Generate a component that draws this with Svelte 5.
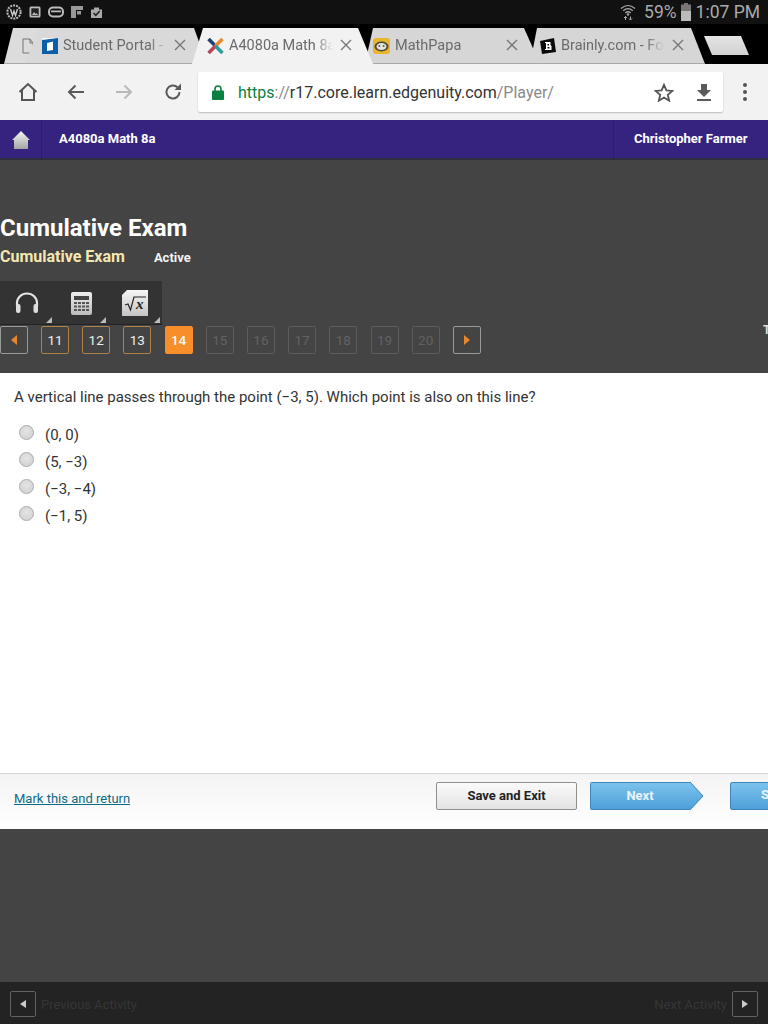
<script>
  const pagesDone = [11, 12, 13];
  const pagesOff = [15, 16, 17, 18, 19, 20];
  const options = ['(0, 0)', '(5, −3)', '(−3, −4)', '(−1, 5)'];
</script>

{#snippet closeX()}
  <svg class="x" width="12" height="12" viewBox="0 0 12 12"><path d="M1 1 11 11M11 1 1 11" fill="none" stroke="#777" stroke-width="1.400"/></svg>
{/snippet}

<div class="page">
  <div class="status">
    <div class="status-left">
      <svg width="16" height="16" viewBox="0 0 16 16"><circle cx="8" cy="8" r="6.600" fill="none" stroke="#bbb" stroke-width="2" stroke-dasharray="2 1"/><path d="M4.500 5 6.500 11.500 8 7 9.500 11.500 11.500 5" fill="none" stroke="#ccc" stroke-width="1.400"/></svg>
      <svg width="12" height="12" viewBox="0 0 12 12"><rect x=".5" y=".5" width="11" height="11" rx="1.500" fill="#bbb"/><rect x="2.300" y="2.300" width="7.400" height="7.400" fill="#222"/><path d="M3 9l2-3 1.500 2 1-1 1.500 2z" fill="#bbb"/></svg>
      <svg width="16" height="12" viewBox="0 0 16 12"><rect x="1" y="1.500" width="14" height="9" rx="4" fill="none" stroke="#bbb" stroke-width="2"/><rect x="3" y="4.500" width="10" height="1.800" fill="#bbb"/></svg>
      <svg width="12" height="12" viewBox="0 0 12 12"><path d="M0 0H12V4H5V12H0Z" fill="#999"/><rect x="6" y="5" width="4" height="3.500" fill="#999"/></svg>
      <svg width="13" height="13" viewBox="0 0 13 13"><path d="M1 3.500H4V1.500H9V3.500H12V12H1Z" fill="#aaa"/><path d="M3.500 7 5.800 9.300 9.800 5" fill="none" stroke="#222" stroke-width="1.500"/></svg>
    </div>
    <div class="status-right">
      <svg class="wifi" width="16" height="18" viewBox="0 0 16 18"><g fill="none" stroke="#aaa" stroke-width="1.200"><path d="M1 5.500Q8 -.5 15 5.500"/><path d="M3.200 7.800Q8 3.500 12.800 7.800"/><path d="M5.300 10Q8 7.500 10.700 10"/></g><circle cx="8" cy="11.500" r="1.200" fill="#aaa"/><path d="M5.500 13.500v3.500M4 15l1.500-1.500L7 15M10.500 13.500v3.500M9 15.500l1.500 1.500 1.500-1.500" fill="none" stroke="#aaa"/></svg>
      <span class="pct">59%</span>
      <svg width="10" height="18" viewBox="0 0 10 18"><rect x="3" y="0" width="4" height="2" fill="#777"/><rect x="0" y="1.500" width="10" height="7" fill="#777"/><rect x="0" y="8" width="10" height="10" fill="#bbb"/></svg>
      <span class="clock">1:07 PM</span>
    </div>
  </div>

  <div class="tabstrip">
    <div class="tab ghost">
      <svg width="12" height="16" viewBox="0 0 12 16"><path d="M1 1H8L11 5V15H1ZM8 1V5H11" fill="none" stroke="#777"/></svg>
    </div>
    <div class="tab t1">
      <svg width="16" height="16" viewBox="0 0 16 16"><rect width="16" height="16" rx="2" fill="#fff"/><path d="M0 2 16 0V16H0Z" fill="#0c5ea8"/><path d="M5 5 11 3.500V12L5 13Z" fill="#fff"/></svg>
      <span class="name">Student Portal - Student</span>
      {@render closeX()}
    </div>
    <div class="tab active">
      <svg width="17" height="16" viewBox="0 0 17 16"><path d="M1.500 1 8.500 8" stroke="#24406e" stroke-width="3.600"/><path d="M15.500 1 8.500 8" stroke="#ee8a2e" stroke-width="3.600"/><path d="M1.500 15 8.500 8" stroke="#b8455a" stroke-width="3.600"/><path d="M15.500 15 8.500 8" stroke="#2f9a9a" stroke-width="3.600"/></svg>
      <span class="name">A4080a Math 8a</span>
      {@render closeX()}
    </div>
    <div class="tab t3">
      <svg width="17" height="16" viewBox="0 0 17 16"><rect width="17" height="16" rx="3" fill="#e8b52c"/><ellipse cx="8.500" cy="8.500" rx="7" ry="5" fill="#4a4a44"/><ellipse cx="8.500" cy="8.500" rx="5" ry="3.500" fill="#e8e4d4"/><circle cx="6.300" cy="8" r="1" fill="#555"/><circle cx="10.700" cy="8" r="1" fill="#555"/></svg>
      <span class="name">MathPapa</span>
      {@render closeX()}
    </div>
    <div class="tab t4">
      <svg width="16" height="16" viewBox="0 0 16 16"><path d="M0 3 14 0 16 14 2 16Z" fill="#0a0a0a"/><path d="M5 4H10.500V7L11.500 8V12H5V11H6V5H5Z" fill="#fff"/><rect x="7.500" y="6" width="1.500" height="1.500" fill="#0a0a0a"/><rect x="7.500" y="9" width="2" height="1.500" fill="#0a0a0a"/></svg>
      <span class="name">Brainly.com - For students</span>
      {@render closeX()}
    </div>
    <div class="newtab"></div>
  </div>

  <div class="toolbar">
    <svg class="tb home" width="20" height="20" viewBox="0 0 20 20"><path d="M1.500 10 10 2 18.500 10M4 8V18H16V8" fill="none" stroke="#555" stroke-width="2"/></svg>
    <svg class="tb back" width="18" height="16" viewBox="0 0 18 16"><path d="M17 8H2M8.500 1.500 2 8 8.500 14.500" fill="none" stroke="#5a5a5a" stroke-width="2"/></svg>
    <svg class="tb fwd" width="18" height="16" viewBox="0 0 18 16"><path d="M1 8H16M9.500 1.500 16 8 9.500 14.500" fill="none" stroke="#b9b9b9" stroke-width="2"/></svg>
    <svg class="tb reload" width="18" height="18" viewBox="0 0 18 18"><path d="M15.500 9A6.500 6.500 0 1 1 13.500 4.300" fill="none" stroke="#5a5a5a" stroke-width="2"/><path d="M10.500 7H17V.5Z" fill="#5a5a5a"/></svg>
    <div class="omnibox">
      <svg class="lock" width="12" height="15" viewBox="0 0 12 15"><rect y="5.500" width="12" height="9.500" rx="1" fill="#0b8043"/><path d="M3 6V4a3 3 0 0 1 6 0V6" fill="none" stroke="#0b8043" stroke-width="1.600"/></svg>
      <span class="url"><span class="green">https</span><span class="grey">://</span>r17.core.learn.edgenuity.com<span class="grey">/Player/</span></span>
      <svg class="star" width="20" height="19" viewBox="0 0 20 19"><path d="M10 1.800 12.400 7.400 18.400 7.900 13.800 11.800 15.200 17.700 10 14.600 4.800 17.700 6.200 11.800 1.600 7.900 7.600 7.400Z" fill="none" stroke="#555" stroke-width="1.800"/></svg>
      <svg class="dl" width="14" height="17" viewBox="0 0 14 17"><path d="M4 0H10V6H14L7 13 0 6H4Z" fill="#5a5a5a"/><rect y="15" width="14" height="2" fill="#5a5a5a"/></svg>
    </div>
    <div class="menu"><i></i><i></i><i></i></div>
  </div>

  <div class="coursebar">
    <div class="homecell">
      <svg width="20" height="20" viewBox="0 0 20 20"><defs><linearGradient id="hg" x1="0" y1="0" x2="0" y2="1"><stop offset="0" stop-color="#f6f6f6"/><stop offset="1" stop-color="#a4a4a4"/></linearGradient></defs><path d="M10 1 19 10H17V19H3V10H1Z" fill="url(#hg)"/></svg>
    </div>
    <div class="coursename">A4080a Math 8a</div>
    <div class="user">Christopher Farmer</div>
  </div>

  <div class="hero">
    <h1>Cumulative Exam</h1>
    <div class="sub"><span class="subtitle">Cumulative Exam</span><span class="state">Active</span></div>
    <div class="tools">
      <div class="tool">
        <svg width="26" height="22" viewBox="0 0 26 22"><path d="M3 14V11A10 9.500 0 0 1 23 11V14" fill="none" stroke="#e6e6e6" stroke-width="2.200"/><rect x="2" y="12" width="4.500" height="9" rx="2" fill="#ddd"/><rect x="19.500" y="12" width="4.500" height="9" rx="2" fill="#ddd"/></svg>
        <i class="corner"></i>
      </div>
      <div class="tool">
        <svg width="21" height="23" viewBox="0 0 21 23"><defs><linearGradient id="cg" x1="0" y1="0" x2="0" y2="1"><stop offset="0" stop-color="#eee"/><stop offset="1" stop-color="#bbb"/></linearGradient></defs><rect width="21" height="23" rx="2" fill="url(#cg)"/><rect x="3" y="4" width="15" height="4" fill="#444"/><g fill="#555"><rect x="3" y="10" width="3" height="2"/><rect x="7" y="10" width="3" height="2"/><rect x="11" y="10" width="3" height="2"/><rect x="15" y="10" width="3" height="2"/><rect x="3" y="13.500" width="3" height="2"/><rect x="7" y="13.500" width="3" height="2"/><rect x="11" y="13.500" width="3" height="2"/><rect x="15" y="13.500" width="3" height="2"/><rect x="3" y="17" width="3" height="2"/><rect x="7" y="17" width="3" height="2"/><rect x="11" y="17" width="3" height="2"/><rect x="15" y="17" width="3" height="2"/></g></svg>
        <i class="corner"></i>
      </div>
      <div class="tool">
        <svg width="26" height="26" viewBox="0 0 26 26"><defs><linearGradient id="fg" x1="0" y1="0" x2="0" y2="1"><stop offset="0" stop-color="#f6f6f6"/><stop offset="1" stop-color="#c4c4c4"/></linearGradient></defs><path d="M5 0H26V26H0V5Z" fill="url(#fg)"/><path d="M3 15 6 14 8.500 20 12 7H24" fill="none" stroke="#222" stroke-width="1.200"/><text x="14" y="19" class="fx">x</text></svg>
        <i class="corner"></i>
      </div>
    </div>
    <div class="pager">
      <div class="pg nav"><i class="left"></i></div>
      <div class="nums">
        {#each pagesDone as n}<div class="pg done">{n}</div>{/each}
        <div class="pg current">14</div>
        {#each pagesOff as n}<div class="pg off">{n}</div>{/each}
        <div class="pg nav"><i class="right"></i></div>
      </div>
      <span class="clip">T</span>
    </div>
  </div>

  <div class="content">
    <p class="q">A vertical line passes through the point (−3, 5). Which point is also on this line?</p>
    <div class="opts">
      {#each options as o}
        <div class="opt"><span class="radio"></span><span>{o}</span></div>
      {/each}
    </div>
  </div>

  <div class="actions">
    <span class="link">Mark this and return</span>
    <div class="save">Save and Exit</div>
    <div class="next">
      <svg class="nextbg" width="114" height="28" viewBox="0 0 114 28"><defs><linearGradient id="ng" x1="0" y1="0" x2="0" y2="1"><stop offset="0" stop-color="#7cc3ee"/><stop offset="1" stop-color="#4f9fd8"/></linearGradient></defs><path d="M1.500.5H100.500L113 14 100.500 27.500H1.500A1 1 0 0 1 .5 26.500V1.500A1 1 0 0 1 1.500.5Z" fill="url(#ng)" stroke="#3d86bb"/></svg>
      <span>Next</span>
    </div>
    <div class="submit">Submit</div>
  </div>

  <div class="dark"></div>

  <div class="bottom">
    <div class="bbtn"><i class="bl"></i></div>
    <span class="blabel">Previous Activity</span>
    <span class="blabel push">Next Activity</span>
    <div class="bbtn"><i class="br"></i></div>
  </div>
</div>

<style>
  :global(body) { margin: 0; background: #444; }
  .page { width: 768px; height: 1024px; overflow: hidden; font-family: Roboto, "Liberation Sans", sans-serif; display: flex; flex-direction: column; }

  .status { height: 24px; background: #111; display: flex; justify-content: space-between; align-items: center; flex: none; }
  .status-left { display: flex; align-items: center; gap: 7px; padding-left: 6px; }
  .status-right { display: flex; align-items: center; color: #aaa; font-size: 17.500px; padding-right: 8px; }
  .wifi { margin-right: 8px; }
  .pct { margin-right: 4px; }
  .clock { margin-left: 5px; }

  .tabstrip { height: 40px; background: #000; display: flex; align-items: flex-end; position: relative; flex: none; }
  .tab { height: 35px; display: flex; align-items: center; background: #d6d6d6; border-bottom: 1px solid #a8a8a8; color: #6a6a6a; font-size: 14.500px; position: relative; flex: none; }
  .tab .name { overflow: hidden; white-space: nowrap; -webkit-mask-image: linear-gradient(to right, #000 82%, transparent 100%); mask-image: linear-gradient(to right, #000 82%, transparent 100%); }
  .tab .x { position: absolute; top: 11px; }
  .tab > svg:first-child { flex: none; }
  .ghost { margin-left: 4px; background: #dcdcdc; clip-path: polygon(0 100%, 9px 0, 100% 0, 100% 100%); padding-left: 18px; width: 32px; }
  .t1 { width: 182px; margin-left: -29px; clip-path: polygon(0 100%, 14px 0, 169px 0, 100% 100%); z-index: 1; background: #d9d9d9; }
  .t1 > svg:first-child { margin-left: 17px; margin-right: 5px; }
  .t1 .name { width: 105px; }
  .t1 .x { left: 149px; }
  .active { width: 181px; margin-left: -15px; background: #f2f2f2; border-bottom-color: #f2f2f2; clip-path: polygon(0 100%, 11px 0, 166px 0, 100% 100%); z-index: 3; }
  .active > svg:first-child { margin-left: 15px; margin-right: 5px; }
  .active .name { width: 104px; }
  .active .x { left: 148px; }
  .t3 { width: 175px; margin-left: -8px; clip-path: polygon(0 100%, 8px 0, 159px 0, 100% 100%); z-index: 2; }
  .t3 > svg:first-child { margin-left: 8px; margin-right: 5px; }
  .t3 .name { width: 100px; }
  .t3 .x { left: 141px; }
  .t4 { width: 175px; margin-left: -10px; clip-path: polygon(0 100%, 7px 0, 161px 0, 100% 100%); z-index: 1; }
  .t4 > svg:first-child { margin-left: 10px; margin-right: 5px; }
  .t4 .name { width: 103px; }
  .t4 .x { left: 142px; }
  .newtab { width: 45px; height: 19px; background: linear-gradient(#e4e4e4, #d2d2d2); clip-path: polygon(0 0, 37px 0, 100% 100%, 8px 100%); margin: 0 0 9px -1px; flex: none; }

  .toolbar { height: 56px; background: #f2f2f2; display: flex; align-items: center; flex: none; }
  .tb { flex: none; }
  .home { margin-left: 18px; }
  .back { margin-left: 29px; }
  .fwd { margin-left: 30px; }
  .reload { margin-left: 31px; }
  .omnibox { margin-left: 16px; width: 525px; height: 40px; background: #fff; border-radius: 2px; box-shadow: 0 1px 1.500px #bdbdbd; display: flex; align-items: center; flex: none; }
  .lock { margin-left: 14px; margin-right: 14px; flex: none; }
  .url { font-size: 16px; color: #333; white-space: nowrap; width: 416px; flex: none; }
  .green { color: #0b8043; }
  .grey { color: #8a8a8a; }
  .star { flex: none; }
  .dl { margin-left: 23px; flex: none; }
  .menu { margin-left: 20px; display: flex; flex-direction: column; gap: 3px; flex: none; }
  .menu i { display: block; width: 4px; height: 4px; border-radius: 50%; background: #555; }

  .coursebar { height: 40px; background: #362380; display: flex; align-items: stretch; color: #fff; font-size: 13px; font-weight: 700; box-shadow: inset 0 -2px 0 #2e2e3e; flex: none; }
  .homecell { width: 42px; box-sizing: border-box; border-right: 1px solid #2c1c6e; display: flex; align-items: center; justify-content: center; }
  .coursename { margin-left: 17px; line-height: 37px; flex: 1; }
  .user { width: 155px; box-sizing: border-box; border-left: 1px solid #2c1c6e; padding-left: 20px; line-height: 37px; white-space: nowrap; }

  .hero { height: 213px; background: #444; flex: none; overflow: hidden; padding-top: 53px; box-sizing: border-box; }
  h1 { margin: 0; font-size: 24px; line-height: 30px; font-weight: 700; color: #fff; }
  .sub { display: flex; align-items: baseline; margin-top: 3px; line-height: 22px; }
  .subtitle { font-size: 16px; font-weight: 700; color: #f6e7b0; }
  .state { font-size: 13px; font-weight: 700; color: #f2f2f2; margin-left: 29px; }
  .tools { width: 162px; height: 44px; margin-top: 12px; background: #333; display: flex; border-bottom: 1px solid #222; box-sizing: border-box; }
  .tool { width: 54px; position: relative; display: flex; align-items: center; justify-content: center; padding-top: 1px; }
  .corner { position: absolute; right: 2px; bottom: 1px; border-style: solid; border-width: 0 0 6px 6px; border-color: transparent transparent #bbb transparent; }
  .fx { font-family: "Liberation Serif", serif; font-style: italic; font-weight: 700; font-size: 15px; fill: #222; }
  .pager { display: flex; align-items: flex-start; margin-top: 1px; }
  .nums { display: flex; gap: 13.200px; margin-left: 13px; }
  .pg { width: 28px; height: 28px; box-sizing: border-box; border: 1px solid #777; border-radius: 2px; display: flex; align-items: center; justify-content: center; font-size: 13.500px; flex: none; padding-bottom: 1px; }
  .nav { border-color: #999; }
  .done { border-color: #b0804a; color: #eee; }
  .current { background: #f78e2a; border-color: #f78e2a; color: #fff; font-weight: 500; }
  .off { border-color: #5c5c5c; color: #626262; }
  .left { border-style: solid; border-width: 5px 6px 5px 0; border-color: transparent #e8862e transparent transparent; }
  .right { border-style: solid; border-width: 5px 0 5px 6px; border-color: transparent transparent transparent #e8862e; }
  .clip { margin-left: auto; width: 8px; margin-right: -3px; color: #ddd; font-size: 12px; font-weight: 700; line-height: 12px; margin-top: -2px; }

  .content { height: 400px; background: #fff; flex: none; box-sizing: border-box; padding: 16px 14px 0; color: #333; }
  .q { margin: 0; font-size: 15px; line-height: 17px; }
  .opts { margin-top: 17px; padding-left: 5px; }
  .opt { height: 27px; display: flex; align-items: flex-start; font-size: 15px; gap: 11px; line-height: 17px; }
  .opt span:last-child { margin-top: 4px; }
  .radio { width: 15px; height: 15px; margin-top: 2px; box-sizing: border-box; border-radius: 50%; border: 1px solid #aaa; background: radial-gradient(circle at 50% 40%, #e4e4e4, #cfcfcf); flex: none; }

  .actions { height: 56px; flex: none; box-sizing: border-box; border-top: 1px solid #d6d6d6; background: linear-gradient(#f4f4f4, #fff); display: flex; align-items: flex-start; padding: 8px 0 0 14px; overflow: hidden; }
  .link { color: #0f6a85; text-decoration: underline; font-size: 13px; width: 422px; margin-top: 9px; flex: none; }
  .save { width: 141px; height: 28px; flex: none; box-sizing: border-box; border: 1px solid #8f8f8f; border-radius: 2px; background: linear-gradient(#fafafa, #e4e4e4); color: #222; font-size: 13px; font-weight: 700; display: flex; align-items: center; justify-content: center; padding-bottom: 2px; }
  .next { margin-left: 13px; width: 114px; height: 28px; flex: none; position: relative; color: #eaf4fb; font-size: 13px; font-weight: 700; display: flex; align-items: center; justify-content: center; padding: 0 14px 2px 0; box-sizing: border-box; }
  .next span { position: relative; }
  .nextbg { position: absolute; left: 0; top: 0; }
  .submit { margin-left: 26px; width: 100px; height: 28px; flex: none; box-sizing: border-box; border: 1px solid #3d86bb; border-radius: 2px; background: linear-gradient(#7cc3ee, #4f9fd8); color: #eaf4fb; font-size: 13px; font-weight: 700; padding-left: 30px; line-height: 24px; }

  .dark { height: 153px; flex: none; background: #444; }
  .bottom { height: 42px; flex: none; background: #232323; display: flex; align-items: center; padding: 2px 10px 0; box-sizing: border-box; }
  .bbtn { width: 26px; height: 26px; box-sizing: border-box; border: 1px solid #626262; border-radius: 2px; display: flex; align-items: center; justify-content: center; flex: none; }
  .bl { border-style: solid; border-width: 4.500px 6px 4.500px 0; border-color: transparent #ccc transparent transparent; }
  .br { border-style: solid; border-width: 4.500px 0 4.500px 6px; border-color: transparent transparent transparent #ccc; }
  .blabel { font-size: 13px; color: #363636; margin-left: 5px; }
  .push { margin-left: auto; margin-right: 5px; }
</style>
